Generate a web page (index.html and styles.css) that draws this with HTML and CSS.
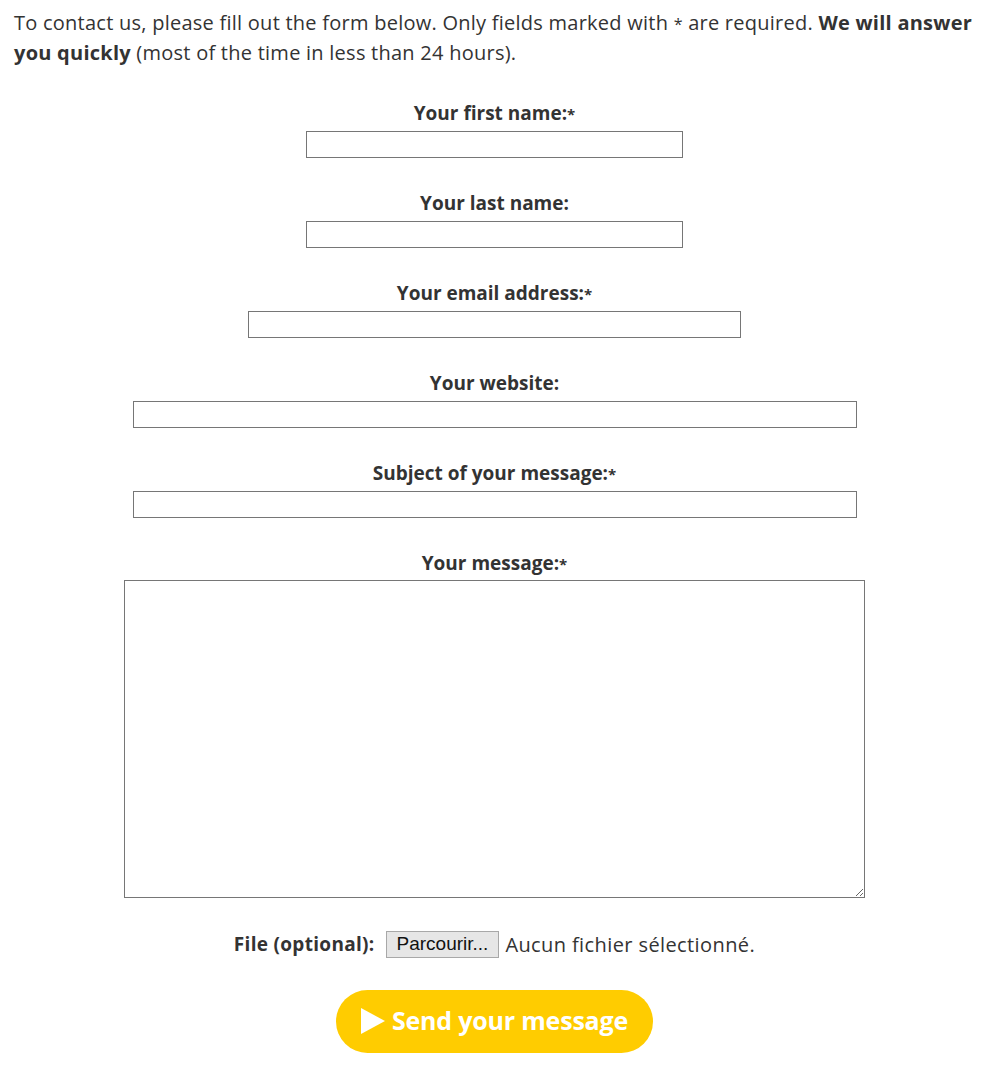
FILE: index.html
```html
<!DOCTYPE html>
<html lang="en">
<head>
<meta charset="utf-8">
<title>Contact</title>
<link rel="stylesheet" href="styles.css">
</head>
<body>
<p class="intro">To contact us, please fill out the form below. Only fields marked with <span class="star">*</span> are required. <strong>We will answer you quickly</strong> (most of the time in less than 24 hours).</p>
<form class="form">
  <div class="field">
    <label class="label" for="f1">Your first name:<span class="req">*</span></label>
    <input class="input w-name" id="f1" type="text">
  </div>
  <div class="field">
    <label class="label" for="f2">Your last name:</label>
    <input class="input w-name" id="f2" type="text">
  </div>
  <div class="field">
    <label class="label" for="f3">Your email address:<span class="req">*</span></label>
    <input class="input w-email" id="f3" type="text">
  </div>
  <div class="field">
    <label class="label" for="f4">Your website:</label>
    <input class="input w-wide" id="f4" type="text">
  </div>
  <div class="field">
    <label class="label" for="f5">Subject of your message:<span class="req">*</span></label>
    <input class="input w-wide" id="f5" type="text">
  </div>
  <div class="field">
    <label class="label" for="f6">Your message:<span class="req">*</span></label>
    <textarea class="textarea" id="f6"></textarea>
  </div>
  <div class="file-row">
    <span class="file-label">File (optional):</span>
    <button type="button" class="file-btn">Parcourir...</button>
    <span class="file-none">Aucun fichier sélectionné.</span>
  </div>
  <button type="button" class="send"><svg class="tri" width="24" height="26" viewBox="0 0 24 26"><polygon points="0,0 24,13 0,26" fill="#fff"/></svg>Send your message</button>
</form>
</body>
</html>
```
FILE: styles.css
```css
html, body {
  background: #fff;
}
body {
  margin: 0;
  padding: 8px 14px 0 14px;
  font-family: "Open Sans", "DejaVu Sans", sans-serif;
  color: #333;
}
.intro {
  margin: 0;
  font-size: 20px;
  line-height: 30px;
  letter-spacing: 0.25px;
}
.intro strong {
  font-weight: 700;
}
.star {
  font-size: 16px;
  line-height: 0;
}
.form {
  display: flex;
  flex-direction: column;
  align-items: center;
  margin-top: 32px;
}
.field {
  display: flex;
  flex-direction: column;
  align-items: center;
  gap: 5px;
  margin-bottom: 32px;
}
.label {
  font-size: 19px;
  font-weight: 700;
  line-height: 26px;
  height: 26px;
}
.req {
  font-size: 15px;
  line-height: 0;
}
.input {
  box-sizing: border-box;
  height: 27px;
  border: 1px solid #767676;
  background: #fff;
  margin: 0;
  padding: 0 4px;
}
.w-name { width: 377px; }
.w-email { width: 493px; }
.w-wide { width: 724px; }
.textarea {
  box-sizing: border-box;
  width: 741px;
  height: 318px;
  border: 1px solid #767676;
  margin: -1px 0 0 0;
  padding: 2px;
  resize: both;
}
.file-row {
  display: flex;
  align-items: center;
  margin-top: 0;
  height: 28px;
  font-size: 20px;
}
.file-label {
  font-weight: 700;
  font-size: 19px;
  letter-spacing: 0.3px;
  margin-right: 11px;
}
.file-btn {
  font-family: "Liberation Sans", Arial, sans-serif;
  font-size: 19px;
  color: #111;
  background: #e6e6e6;
  border: 1px solid #a8a8a8;
  border-radius: 0;
  height: 27px;
  padding: 0 10px;
  margin: 0 6px 0 0;
}
.file-none {
  color: #333;
  letter-spacing: 0.4px;
}
.send {
  margin-top: 32px;
  width: 317px;
  height: 63px;
  border: none;
  border-radius: 32px;
  background: #ffcc00;
  color: #fff;
  font-family: "Open Sans", "DejaVu Sans", sans-serif;
  font-size: 25px;
  font-weight: 700;
  letter-spacing: -0.2px;
  line-height: 1;
  display: flex;
  align-items: center;
  justify-content: center;
  gap: 7px;
  padding: 0 0 2px 0;
}
.tri {
  display: block;
  flex: none;
}
```
